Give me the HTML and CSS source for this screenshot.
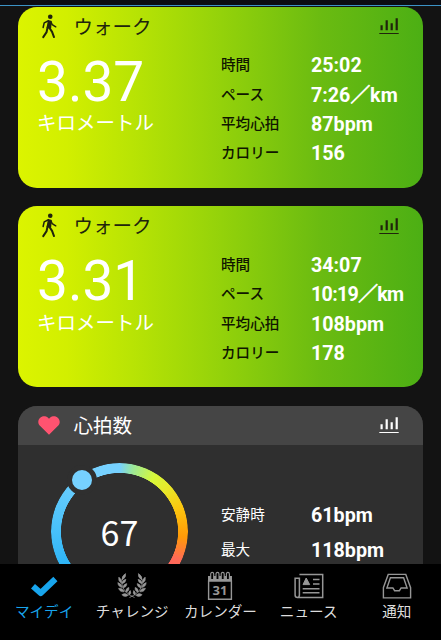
FILE: index.html
```html
<!DOCTYPE html>
<html lang="ja">
<head>
  <meta charset="UTF-8" />
  <meta name="viewport" content="width=device-width, initial-scale=1.0" />
  <title>マイデイ</title>
  <link rel="stylesheet" href="styles.css">
</head>
<body>
  <svg class="symbols" width="0" height="0">
    <symbol id="walk" viewBox="0 0 16 26">
      <circle cx="9.3" cy="2.9" r="2.4" fill="currentColor"/>
      <path d="M7.6 7.2 L10 7.8 L9.5 14.5 L6.3 14 Z" fill="currentColor" stroke="currentColor" stroke-width="1.6" stroke-linejoin="round"/>
      <path d="M7.4 7 L3 9.3 L1.9 14 M9.8 8 L11.3 11 L15 13.3" fill="none" stroke="currentColor" stroke-width="1.6" stroke-linecap="round" stroke-linejoin="round"/>
      <path d="M6.5 14 L5.5 18.8 L2 24 M8.5 14.5 L11.2 18.6 L13.2 24" fill="none" stroke="currentColor" stroke-width="2.1" stroke-linecap="round" stroke-linejoin="round"/>
    </symbol>
    <symbol id="bars" viewBox="0 0 20 18">
      <path d="M2.6 8.3v5M7.7 3.3v10M12.7 6.3v7M17.7 1.3v12" stroke="currentColor" stroke-width="2.2" fill="none"/>
      <path d="M.3 16.5h19.4" stroke="currentColor" stroke-width="1.2"/>
    </symbol>
  </svg>

  <div class="app">
    <div class="top-line"></div>
    <main class="feed">
      <section class="card walk">
        <header class="card-head">
          <svg class="head-icon"><use href="#walk"/></svg>
          <h2>ウォーク</h2>
          <svg class="chart-icon"><use href="#bars"/></svg>
        </header>
        <div class="card-body">
          <div class="distance">
            <div class="number">3.37</div>
            <div class="unit">キロメートル</div>
          </div>
          <dl class="stats">
            <dt>時間</dt><dd>25:02</dd>
            <dt>ペース</dt><dd>7:26<span class="slash">／</span>km</dd>
            <dt>平均心拍</dt><dd>87bpm</dd>
            <dt>カロリー</dt><dd>156</dd>
          </dl>
        </div>
      </section>

      <section class="card walk">
        <header class="card-head">
          <svg class="head-icon"><use href="#walk"/></svg>
          <h2>ウォーク</h2>
          <svg class="chart-icon"><use href="#bars"/></svg>
        </header>
        <div class="card-body">
          <div class="distance">
            <div class="number">3.31</div>
            <div class="unit">キロメートル</div>
          </div>
          <dl class="stats">
            <dt>時間</dt><dd>34:07</dd>
            <dt>ペース</dt><dd class="tight">10:19<span class="slash">／</span>km</dd>
            <dt>平均心拍</dt><dd>108bpm</dd>
            <dt>カロリー</dt><dd>178</dd>
          </dl>
        </div>
      </section>

      <section class="card heart">
        <header class="card-head">
          <svg class="head-icon" viewBox="-1 -1.8 26 23">
            <path d="M12 19.6 L2.2 10.1 C-3.2 4.2 4.6 -3.6 11 1.4 L12 2.3 L13 1.4 C19.4 -3.6 27.2 4.2 21.8 10.1 Z" fill="#ff5370"/>
          </svg>
          <h2>心拍数</h2>
          <svg class="chart-icon"><use href="#bars"/></svg>
        </header>
        <div class="card-body">
          <div class="gauge">
            <div class="ring"></div>
            <div class="dot"></div>
            <span class="bpm">67</span>
          </div>
          <dl class="stats">
            <dt>安静時</dt><dd>61bpm</dd>
            <dt>最大</dt><dd>118bpm</dd>
          </dl>
        </div>
      </section>
    </main>

    <nav class="tabs">
      <a class="tab active">
        <svg viewBox="0 0 30 30"><path d="M4 15.2 L11.7 22 L26.4 8" fill="none" stroke="currentColor" stroke-width="6" stroke-linejoin="round"/></svg>
        <span>マイデイ</span>
      </a>
      <a class="tab">
        <svg viewBox="0 0 30 30">
          <defs>
            <g id="laurel">
              <path d="M6.5 5 Q3 10 5.5 16 Q8.5 22.5 17.5 26.5" fill="none" stroke="currentColor" stroke-width=".8"/>
              <path d="M5 9 Q4.4 5 8.6 2.5 Q9.5 6.5 5 9Z M4.3 12 Q.8 10 1.8 6 Q5 8 4.3 12Z M5 16.5 Q.8 15.5 .8 11.5 Q4.8 12.5 5 16.5Z M7.3 20.8 Q2.8 21.3 1.5 17.3 Q6 16.8 7.3 20.8Z M11.3 24.2 Q7.7 27 4.8 23.7 Q8.3 21 11.3 24.2Z M4.8 12.8 Q5 8.8 9 8.3 Q8.8 12 4.8 12.8Z M6 17 Q6 13 9.8 12.5 Q10 16 6 17Z M8.8 21.2 Q8.3 17.5 11.8 16.3 Q12.8 20 8.8 21.2Z M12 24.3 Q10.8 21 13.3 19.5 Q15 22.5 12 24.3Z" fill="currentColor" stroke="currentColor" stroke-width=".5"/>
            </g>
          </defs>
          <use href="#laurel"/>
          <use href="#laurel" transform="matrix(-1 0 0 1 30 0)"/>
        </svg>
        <span>チャレンジ</span>
      </a>
      <a class="tab">
        <svg viewBox="0 0 30 30">
          <path d="M3.6 10h22.8v18.3H3.6Z" fill="none" stroke="currentColor" stroke-width="1.4"/>
          <path d="M3 5h24v5H3Z" fill="currentColor"/>
          <path d="M5.7 8V3q0-1.6 1.5-1.6T8.7 3v5M11 8V3q0-1.6 1.5-1.6T14 3v5M16.2 8V3q0-1.6 1.5-1.6T19.2 3v5M21.4 8V3q0-1.6 1.5-1.6T24.4 3v5" fill="#000" stroke="currentColor" stroke-width="1.1"/>
          <text class="cal-day" x="15" y="24" text-anchor="middle" fill="currentColor">31</text>
        </svg>
        <span>カレンダー</span>
      </a>
      <a class="tab">
        <svg viewBox="0 0 30 30" fill="none" stroke="currentColor" stroke-width="1.5">
          <path d="M5.4 3.4h23.3v23H3.5q-2.4 0-2.4-2.5V7.3h4.3v16.6q0 2.3-1.9 2.5"/>
          <path d="M8.7 17.7h16.8M8.7 21.8h16.8M19 8.5h6.5M19 13h6.5"/>
          <path d="M9 13.6 L12.2 7 L15.7 13.6Z" fill="currentColor" stroke-width="1"/>
        </svg>
        <span>ニュース</span>
      </a>
      <a class="tab">
        <svg viewBox="0 0 30 30" fill="none" stroke="currentColor" stroke-width="1.4">
          <path d="M6.2 3.4h17.6l4.8 13.3v10.2H1.4V16.7Z"/>
          <path d="M8.4 6.7h13.2l3.5 10.3h-6l-1.7 2.7h-4.8l-1.7-2.7h-6Z"/>
        </svg>
        <span>通知</span>
      </a>
    </nav>
  </div>
</body>
</html>
```

FILE: styles.css
```css
* {
  box-sizing: border-box;
}
body {
  margin: 0;
  background-color: #131313;
  color: #fff;
  font-family: Roboto, 'Noto Sans CJK JP', sans-serif;
}
.symbols {
  display: block;
}
.app {
  width: 441px;
  height: 640px;
  display: flex;
  flex-direction: column;
  overflow: hidden;
}
.top-line {
  flex: none;
  height: 6px;
  background-color: #0c0d12;
  border-bottom: 1px solid #3c93c6;
}
.feed {
  flex: 1;
  min-height: 0;
  padding: 0.5px 18px 0 18.3px;
  display: flex;
  flex-direction: column;
  gap: 18.7px;
  overflow: hidden;
}
.card {
  flex: none;
  height: 181px;
  border-radius: 19px;
  overflow: hidden;
}
.card-head {
  height: 39px;
  padding: 0 24.5px 0 18.7px;
  display: flex;
  align-items: center;
}
.head-icon {
  width: 24px;
  height: 25px;
}
.card-head h2 {
  flex: 1;
  margin: 2px 0 0 12.5px;
  font-size: 19.5px;
  line-height: 37px;
  font-weight: 400;
}
.chart-icon {
  width: 20px;
  height: 18px;
}
.card-body {
  display: flex;
  padding-left: 18.7px;
}
.walk {
  background: linear-gradient(90deg, #dcf400 0%, #d2ef00 12%, #b9e404 28%, #94d20a 50%, #6abb11 75%, #4caf14 100%);
}
.walk .card-head {
  color: #20240c;
}
.distance {
  width: 184px;
}
.number {
  margin: 6px 0 0;
  font-size: 55px;
  line-height: 60px;
}
.unit {
  padding-top: 0.6px;
  font-size: 19.5px;
  line-height: 24px;
}
.stats {
  margin: 5.6px 0 0;
  display: grid;
  grid-template-columns: 90px auto;
  grid-auto-rows: 29.3px;
  align-items: center;
}
.stats dt {
  font-size: 14.6px;
  line-height: 29px;
}
.stats dd {
  margin: 0;
  font-size: 19.7px;
  line-height: 29px;
  font-weight: 700;
  white-space: nowrap;
}
.stats .tight {
  letter-spacing: -0.7px;
}
.slash {
  -webkit-text-stroke: 0.7px #fff;
}
.walk dt {
  color: #101600;
  font-weight: 500;
}
.heart {
  background-color: #2f2f2f;
}
.heart .card-head {
  background-color: #454545;
}
.gauge {
  position: relative;
  width: 137px;
  height: 137px;
  margin: 18px 33px 0 14px;
  display: flex;
  align-items: center;
  justify-content: center;
}
.ring {
  position: absolute;
  inset: 0;
  border-radius: 50%;
  background: conic-gradient(#76d1ff 0deg, #9be89a 12deg, #d6f83a 32deg, #e8e82a 48deg, #fcc70f 68deg, #ff9a08 95deg, #ff6b55 115deg, #ff5370 150deg, #1aa8f0 200deg, #2fb5f6 240deg, #4bc2fa 275deg, #76d1ff 335deg, #76d1ff 360deg);
  -webkit-mask: radial-gradient(circle, transparent 58.2px, #000 58.8px);
  mask: radial-gradient(circle, transparent 58.2px, #000 58.8px);
}
/* current zone marker on the ring */
.dot {
  position: absolute;
  left: 16px;
  top: 2.5px;
  width: 30px;
  height: 30px;
  border: 5px solid #2f2f2f;
  border-radius: 50%;
  background-color: #76d1ff;
}
.bpm {
  padding-top: 2px;
  font-family: 'Noto Sans CJK JP', sans-serif;
  font-size: 34px;
  line-height: 40px;
}
.heart .stats {
  margin-top: 52.5px;
  grid-auto-rows: 35.5px;
}
.tabs {
  flex: none;
  height: 76px;
  padding-top: 7px;
  background-color: #000;
  display: grid;
  grid-template-columns: repeat(5, 88.2px);
}
.tab {
  display: flex;
  flex-direction: column;
  align-items: center;
  color: #969696;
}
.tab svg {
  width: 30px;
  height: 30px;
}
.tab span {
  color: #ddd;
  font-size: 14.6px;
  line-height: 22px;
  white-space: nowrap;
}
.tab.active,
.tab.active span {
  color: #18a5ed;
}
.cal-day {
  font: 700 13px 'Noto Sans', sans-serif;
}
```
